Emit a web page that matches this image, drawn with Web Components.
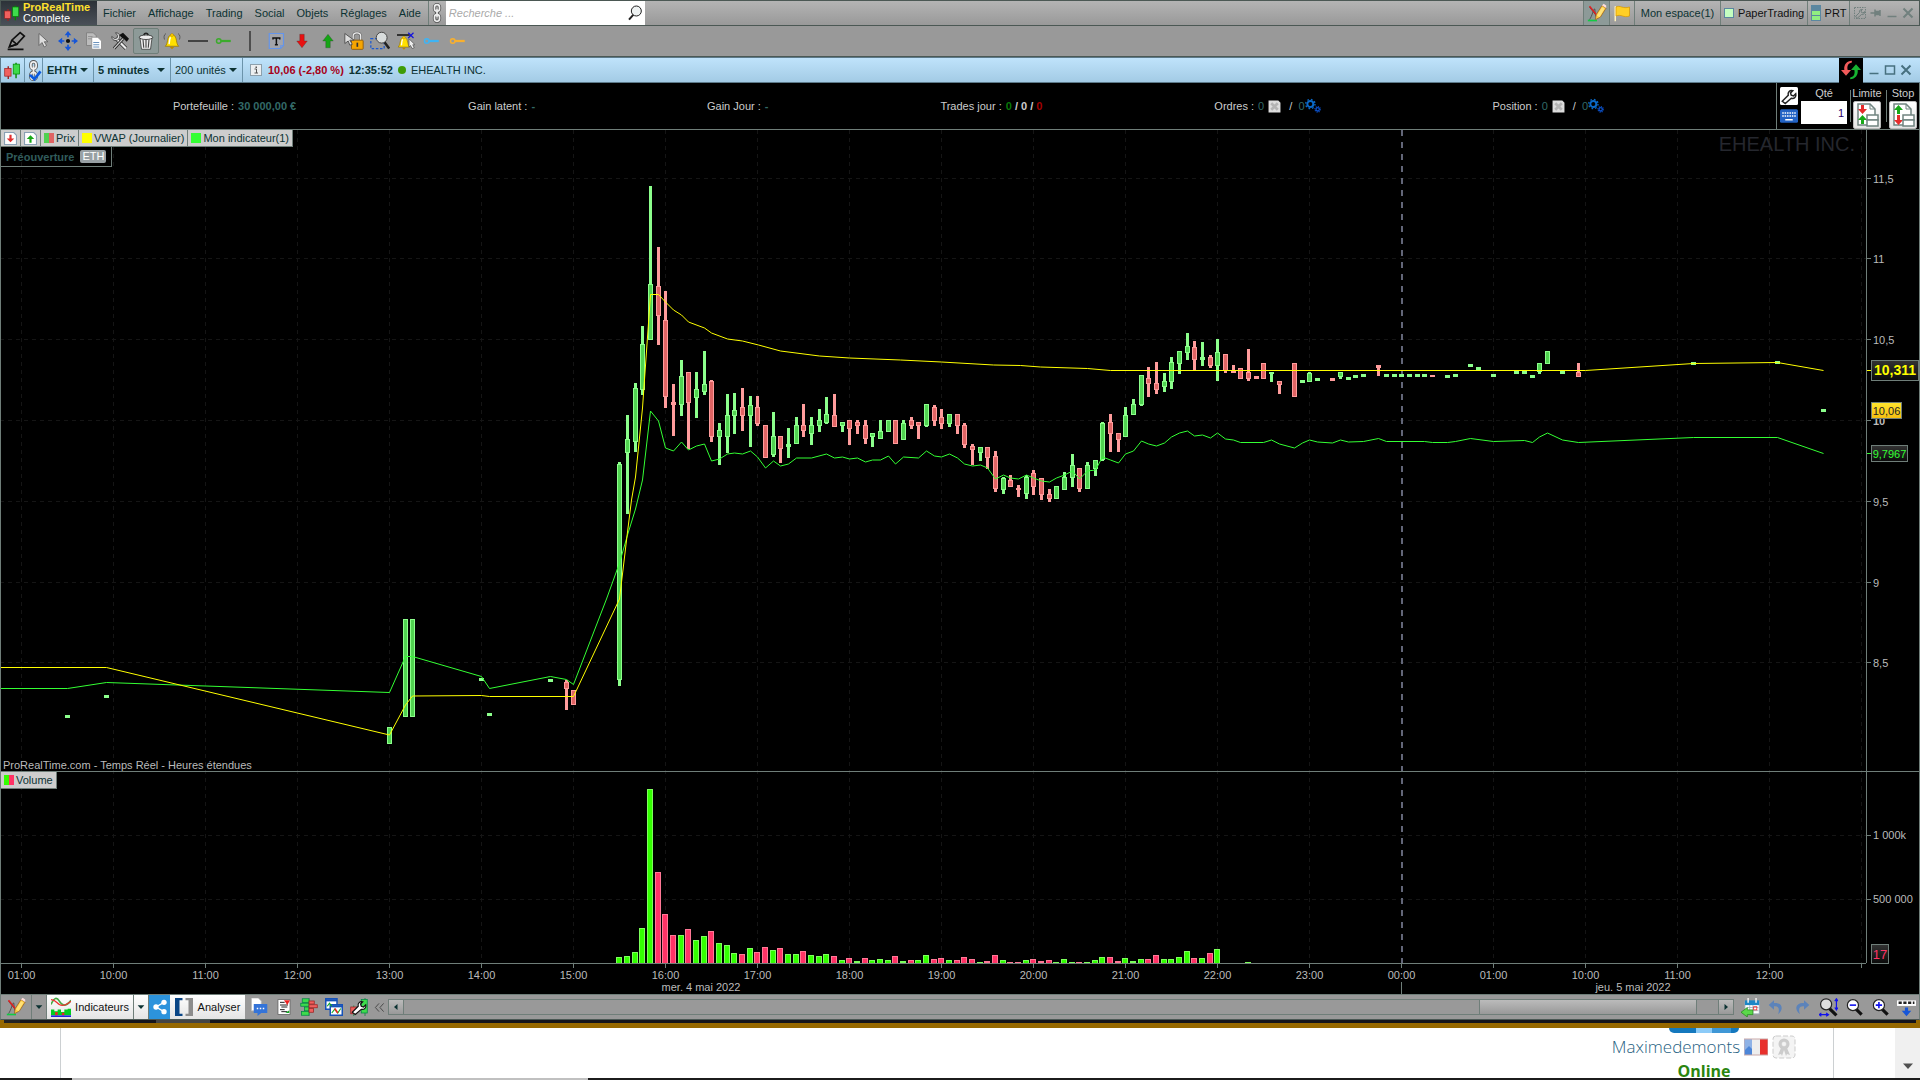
<!DOCTYPE html>
<html lang="fr">
<head>
<meta charset="utf-8">
<title>EHEALTH INC. - ProRealTime Complete</title>
<style>
  html, body { margin: 0; height: 100%; }
  body {
    display: flex;
    flex-direction: column;
    overflow: hidden;
    background: #fff;
    color: #0c3232;
    font: 11px/14px "Liberation Sans", Arial, sans-serif;
  }
  prt-chart { flex: 1; }
</style>
</head>
<body>
<prt-menubar></prt-menubar>
<prt-toolbar></prt-toolbar>
<prt-titlebar></prt-titlebar>
<prt-account></prt-account>
<prt-chart>
  <prt-tag slot="price" icon="tagDown"></prt-tag>
  <prt-tag slot="price" icon="tagUp"></prt-tag>
  <prt-tag slot="price" colors="#50d250,#e06464">Prix</prt-tag>
  <prt-tag slot="price" colors="#ff0,#ff0">VWAP (Journalier)</prt-tag>
  <prt-tag slot="price" colors="#3f3,#3f3">Mon indicateur(1)</prt-tag>
  <prt-tag slot="volume" colors="#3f0,#f36">Volume</prt-tag>
</prt-chart>
<prt-bottombar></prt-bottombar>
<forum-page></forum-page>

<script>
const pencilArt = '<path d="M3 5l9 11M3 20c3-4 5-13 6-13s0 8 3 12" fill="none" stroke="#444"/><path d="M3 4l9 11 5-7" fill="none" stroke="#d22" stroke-width="2"/><path d="M1 21h11" stroke="#1c4" stroke-width="2"/><path d="M10 20l1-6 7-11 5 3-7 11z" fill="#ffcc3c" stroke="#963"/><path d="M12 15l3 2 6-10-3-2z" fill="#ffe27a"/><path d="M18 3l5 3 0-3-3-2z" fill="#fdd"/>';
const keyArt = color => `<circle cx="5" cy="12" r="3" fill="none" stroke="${color}" stroke-width="2"/><path d="M8 12h13" stroke="${color}" stroke-width="3"/>`;
const arrowArt = color => `<path d="M9 3h6v9h4l-7 9-7-9h4z" fill="${color}" stroke="#333" stroke-width=".4"/>`;
const lensArt = sign => `<path d="M14 14l7 7" stroke="#111" stroke-width="4"/><circle cx="10" cy="9" r="7" fill="#fff" stroke="#222" stroke-width="1.5"/>${sign}`;
const bellArt = '<path d="M3 19c4-3 2-13 7-15h4c5 2 3 12 7 15z" fill="#ffe000" stroke="#987400"/><circle cx="12" cy="4" r="2" fill="#fc0" stroke="#987400" stroke-width=".5"/><path d="M9 20h6l-3 3z" fill="#b80"/><path d="M10 7c-2 3-1 7-2 9" stroke="#fff" stroke-width="2" fill="none"/>';
const cursorArt = '<path d="M8 2v16l4-4 3 6 3-2-3-5h5z" fill="#ddd" stroke="#555"/>';
const candleArt = '<path d="M17 1v22" stroke="#080" stroke-width="2"/><path d="M6 6v18" stroke="#922" stroke-width="2"/><rect x="1" y="9" width="9" height="11" fill="#f0605e" stroke="#922"/><rect x="13" y="3" width="9" height="14" fill="#3fdb4c" stroke="#080"/>';
const linkArt = '<g fill="none" stroke="#555" stroke-width="4"><rect x="9" y="2" width="6" height="8" rx="3"/><rect x="9" y="14" width="6" height="8" rx="3"/><path d="M12 7v10"/></g><g fill="none" stroke="#eee" stroke-width="2"><rect x="9" y="2" width="6" height="8" rx="3"/><rect x="9" y="14" width="6" height="8" rx="3"/><path d="M12 7v10"/></g>';
const wrenchPath = 'M3 19l8-8c-1-4 2-7 6-6l-3 3 1 3 3 1 3-3c1 4-2 7-6 6l-8 7z';
const gearsArt = '<circle cx="8" cy="9" r="4.500" fill="none" stroke="#0b69c7" stroke-width="3"/><circle cx="8" cy="9" r="7" fill="none" stroke="#0b69c7" stroke-width="2" stroke-dasharray="2.500 3"/><circle cx="19" cy="17" r="2.500" fill="none" stroke="#0b4fc7" stroke-width="2"/><circle cx="19" cy="17" r="4" fill="none" stroke="#0b4fc7" stroke-width="2" stroke-dasharray="1.500 1.600"/>';
const sheetArt = '<path d="M3 1h12l5 5v16H3z" fill="#fff" stroke="#708480" stroke-width="1.500"/><path d="M15 1v5h5" fill="none" stroke="#708480"/>';
const boxesArt = '<rect x="12" y="12" width="11" height="5" fill="#fff" stroke="#708480" stroke-width="1.500"/><rect x="12" y="17" width="11" height="6" fill="#fff" stroke="#708480" stroke-width="1.500"/>';

// every icon is drawn on a 24 x 24 grid
const ICONS = {
  candles: candleArt,
  link: linkArt,
  linkCheck: linkArt + '<path d="M8 17l5 5 7-9" fill="none" stroke="#0a5ae0" stroke-width="3"/>',
  search: '<path d="M10 14l-7 8" stroke="#222" stroke-width="3"/><circle cx="14" cy="9" r="7.500" fill="#eef2f2" stroke="#222" stroke-width="1.500"/>',
  pencil: pencilArt,
  flag: '<path d="M3 3v20" stroke="#fff2c0" stroke-width="2"/><path d="M4 4c5-3 9 3 18 0v12c-8 3-11-3-18 0z" fill="#ffcf26" stroke="#d99a00"/>',
  pen: '<path d="M4 19l3-8L17 2l5 4-9 10z" fill="none" stroke="#111" stroke-width="2"/><path d="M4 19l9-3-6-5M2 22h19" stroke="#111" fill="none" stroke-width="2"/>',
  cursor: cursorArt,
  move: '<path d="M12 0l4 5h-3v14h3l-4 5-4-5h3V5H8zM0 12l5-4v3h14V8l5 4-5 4v-3H5v3z" fill="#1656d8"/><circle cx="12" cy="12" r="4.500" fill="#999"/><circle cx="12" cy="12" r="2.500" fill="#111"/>',
  copy: '<path d="M2 1h9l4 4v13H2z" fill="#bbb" stroke="#777"/><path d="M4 6h6M4 9h5" stroke="#888"/><path d="M9 7h8l5 5v11H9z" fill="#fff" stroke="#888"/><path d="M11 14h8M11 17h8M11 20h8" stroke="#3a6fa8"/>',
  tools: '<path d="M6 8l14 14" stroke="#222" stroke-width="5"/><path d="M6 8l14 14" stroke="#eee" stroke-width="3"/><path d="M1 6l4 3 3-1 1-3-3-4c6 0 7 5 4 9-4 3-9 1-9-4z" fill="#ddd" stroke="#333"/><path d="M16 9L4 22" stroke="#222" stroke-width="4"/><path d="M16 9L4 22" stroke="#ccc" stroke-width="1.500"/><path d="M11 4l5-3 8 8-3 4-4-4-2-1z" fill="#111"/>',
  trash: '<path d="M4 8h16l-2 15H6z" fill="#eee" stroke="#333"/><path d="M8 10l1 11M12 10v11M16 10l-1 11" stroke="#444" stroke-width="1.500"/><ellipse cx="12" cy="7" rx="9" ry="3" fill="#eee" stroke="#222"/><path d="M9 4c1-3 5-3 6 0" fill="none" stroke="#222" stroke-width="2"/>',
  bell: bellArt + '<path d="M4 2c-3 2-3 5-2 8M20 2c3 2 3 5 2 8" fill="none" stroke="#444"/>',
  line: '<path d="M0 12h24" stroke="#111" stroke-width="1.500"/>',
  keyGreen: keyArt('#3bab2c'),
  sep: '<path d="M12 0v24" stroke="#222" stroke-width="1.500"/>',
  text: '<path d="M3 2h19v16l-4 4H3z" fill="#a2a4aa" stroke="#6394ea" stroke-width="1.500"/><path d="M22 18h-4v4" fill="none" stroke="#6394ea"/><path d="M8 8h9M12.500 8v9M10.500 17h4M8 7v3M17 7v3" stroke="#111" stroke-width="2" fill="none"/>',
  arrowRed: arrowArt('#e81010'),
  arrowGreen: '<g transform="rotate(180 12 12)">' + arrowArt('#15a515') + '</g>',
  lock: '<path d="M11 11V6c0-5 9-5 9 0v5" fill="none" stroke="#666" stroke-width="3"/><path d="M11 11V6c0-5 9-5 9 0v5" fill="none" stroke="#eee" stroke-width="1.500"/><rect x="9" y="11" width="14" height="11" rx="1" fill="#f6a500" stroke="#8b5500"/><path d="M16 14v5" stroke="#333" stroke-width="2"/><path d="M1 3v12l4-3 2 5 3-1-3-5h5z" fill="#ddd" stroke="#444"/>',
  zoomRect: '<rect x="1" y="9" width="16" height="12" fill="none" stroke="#1d5ad0" stroke-width="1.500" stroke-dasharray="3 2"/><path d="M17 13l6 8" stroke="#222" stroke-width="3"/><circle cx="14" cy="8" r="6.500" fill="#d8dcdc" stroke="#333"/>',
  bellLine: '<g transform="translate(-1 4) scale(.85)">' + bellArt + '</g><path d="M0 4h17" stroke="#111" stroke-width="2"/><path d="M15 1l7 7M22 1l-7 7" stroke="#11d" stroke-width="1.500"/><path d="M16 9v11l2-2 2 4 3-1-2-4h3z" fill="#eee" stroke="#555"/>',
  keyBlue: keyArt('#3fb4f4'),
  keyOrange: keyArt('#f9b02e'),
  info: '<rect x="1" y="1" width="22" height="22" fill="#eceff1" stroke="#8da0ac" stroke-width="2"/><path d="M9 10h4v8M9 18h7" stroke="#555" stroke-width="2" fill="none"/><path d="M11 5h3v3h-3z" fill="#555"/>',
  refresh: '<path d="M13 3C8 4 7 8 8 12h4l-6 7-6-7h4C3 6 7 1 13 1z" fill="#f25a5a"/><path d="M11 21c5-1 6-5 5-9h-4l6-7 6 7h-4c1 6-3 11-9 11z" fill="#17b331"/>',
  min: '<path d="M3 19h18" stroke="currentColor" stroke-width="3"/>',
  max: '<rect x="3" y="4" width="18" height="16" fill="none" stroke="currentColor" stroke-width="3"/>',
  close: '<path d="M3 3l18 18M21 3L3 21" stroke="currentColor" stroke-width="4"/>',
  pin: '<path d="M1 12h8M10 5v14M10 12h10M20 6v12M11 9h8v6h-8z" stroke="currentColor" stroke-width="3" fill="currentColor"/>',
  settings: '<rect x="1" y="1" width="22" height="22" fill="none" stroke="currentColor" stroke-width="2" stroke-dasharray="3 2"/><path d="' + wrenchPath + '" fill="none" stroke="currentColor" stroke-width="2"/>',
  wrench: '<rect width="24" height="24" rx="2" fill="#fff"/><path d="' + wrenchPath + '" fill="none" stroke="#222" stroke-width="2"/>',
  keyboard: '<rect y="3" width="24" height="18" rx="2" fill="#2363c4"/><path d="M3 8h18M3 12h18" stroke="#fff" stroke-width="2" stroke-dasharray="2 1.200"/><path d="M7 17h10" stroke="#fff" stroke-width="2"/>',
  gears: gearsArt,
  cross: '<path d="M1 1h18l4 4v18H1z" fill="#ddd"/><path d="M6 6l12 12M18 6L6 18" stroke="#b4b4b4" stroke-width="5"/>',
  limit: sheetArt + '<path d="M6 2h3v4h3l-4.500 5L3 6h3z" fill="#e62b2b"/><path d="M6 21h3v-4h3l-4.500-5L3 17h3z" fill="#18a818"/>' + boxesArt,
  stop: sheetArt + '<path d="M6 11h3V7h3L7.500 2 3 7h3z" fill="#18a818"/><path d="M6 12h3v5h3l-4.500 5L3 17h3z" fill="#e62b2b"/>' + boxesArt,
  tagDown: '<path d="M1 1h17l5 5v17H1z" fill="#fff" stroke="#8aa0b4" stroke-width="2"/><path d="M10 5h4v7h5l-7 7-7-7h5z" fill="#e23030"/>',
  tagUp: '<path d="M1 1h17l5 5v17H1z" fill="#fff" stroke="#8aa0b4" stroke-width="2"/><path d="M10 20h4v-7h5l-7-7-7 7h5z" fill="#18a818"/>',
  indicator: '<path d="M0 9c4-9 7-9 10-4s7 8 14-1" fill="none" stroke="#4a4" stroke-width="2"/><path d="M0 3c5 0 7 4 10 6s8 1 14-4" fill="none" stroke="#e33" stroke-width="1.500"/><path d="M0 22v-7h4v2h4v-2h4v3h4v-3h4v-1h4v8z" fill="#0c2"/><path d="M5 18h3v4H5zM13 19h3v3h-3z" fill="#e22"/><path d="M0 23h24" stroke="#22d" stroke-width="2"/>',
  share: '<path d="M18 5L6 12l12 7" fill="none" stroke="#fff" stroke-width="2"/><g fill="#fff"><circle cx="18" cy="5" r="4"/><circle cx="6" cy="12" r="4"/><circle cx="18" cy="19" r="4"/></g>',
  brackets: '<path d="M10 0H0v24h10v-3H6V3h4z" fill="#0a4686"/><path d="M14 0h10v24H14v-3h4V3h-4z" fill="#8c8c8c"/>',
  chat: '<path d="M2 0h9l4 4v13H2z" fill="#fff" stroke="#bbb"/><path d="M5 8h18v12h-8l-5 4v-4H5z" fill="#3474d8"/><path d="M9 14h2M13 14h2M17 14h2" stroke="#fff" stroke-width="2"/>',
  report: '<rect x="3" y="1" width="18" height="22" fill="#fff" stroke="#555"/><path d="M6 5h7M6 9h12M8 12h9M6 16h7M8 19h9" stroke="#222" stroke-width="1.500"/><path d="M12 2h9l-4 7z" fill="#e22"/><path d="M14 21l6-4v4z" fill="#1a2"/>',
  book: '<path d="M12 0v24" stroke="#555"/><g fill="#3ddb4c" stroke="#084"><rect x="3" y="1" width="9" height="5"/><rect x="1" y="7" width="11" height="4"/><rect x="6" y="12" width="6" height="5"/><rect x="2" y="18" width="10" height="5"/></g><g fill="#f0605e" stroke="#922"><rect x="12" y="4" width="7" height="4"/><rect x="12" y="9" width="11" height="4"/><rect x="12" y="14" width="6" height="5"/></g>',
  windows: '<rect x="1" y="1" width="15" height="14" fill="#fff" stroke="#1652b8" stroke-width="2"/><path d="M1 3h15" stroke="#1652b8" stroke-width="3"/><rect x="7" y="9" width="16" height="14" fill="#fff" stroke="#1652b8" stroke-width="2"/><path d="M7 11h16" stroke="#1652b8" stroke-width="3"/><path d="M3 11l3-4 3 4M9 20l4-5 4 5 4-6" fill="none" stroke="#1a2" stroke-width="1.500"/><path d="M13 14l4 6" stroke="#e22" stroke-width="2"/>',
  candleTool: '<path d="M20 0v24M5 10v14" stroke="#083"/><rect x="15" y="2" width="8" height="18" fill="#3fdb4c" stroke="#084"/><rect x="1" y="12" width="8" height="9" fill="#f0605e" stroke="#922"/><path d="' + wrenchPath + '" fill="#fff" stroke="#111" stroke-width="1.500"/>',
  chevrons: '<path d="M11 3l-8 9 8 9M21 3l-8 9 8 9" fill="none" stroke="#444" stroke-width="2"/>',
  left: '<path d="M15 6v12l-7-6z" fill="#0c3232"/>',
  right: '<path d="M9 6v12l7-6z" fill="#0c3232"/>',
  down: '<path d="M2 7h20L12 18z" fill="currentColor"/>',
  calendar: '<rect x="5" y="4" width="18" height="16" fill="#fff" stroke="#9ab"/><path d="M5 3h18v6H5z" fill="#1d86c6"/><path d="M9 0v6M19 0v6" stroke="#eee" stroke-width="2"/><path d="M8 12h14M8 16h14M11 9v10M15 9v10" stroke="#9ab"/><rect x="16" y="11" width="4" height="4" fill="none" stroke="#e22"/><path d="M0 18l8-6v3h7v6H8v3z" fill="#5bd84a" stroke="#2a8a22"/>',
  undo: '<path d="M9 2L1 9l8 7v-5c7-1 9 4 6 12 9-7 7-18-6-17z" fill="#5c83ba"/>',
  redo: '<path d="M15 2l8 7-8 7v-5c-7-1-9 4-6 12-9-7-7-18 6-17z" fill="#5c83ba"/>',
  zoomFit: '<path d="M13 13l9 9" stroke="#111" stroke-width="4"/><circle cx="9" cy="8" r="7" fill="#ddd" stroke="#222" stroke-width="1.500"/><path d="M22 1v14M20 4l2-3 2 3M20 12l2 3 2-3M0 21h12M3 19l-3 2 3 2M9 19l3 2-3 2" fill="none" stroke="#11e" stroke-width="1.500"/>',
  zoomOut: lensArt('<path d="M6 9h8" stroke="#11e" stroke-width="2"/>'),
  zoomIn: lensArt('<path d="M6 9h8M10 5v8" stroke="#11e" stroke-width="2"/>'),
  dockDown: '<rect y="3" width="24" height="7" fill="#fff"/><path d="M2 6h20" stroke="#222" stroke-width="3" stroke-dasharray="4 2"/><path d="M10 12h4v4h4l-6 7-6-7h4z" fill="#1656d8"/>',
  france: '<path d="M0 4h8v16H0z" fill="#8fb2e6"/><path d="M8 4h8v16H8z" fill="#eee"/><path d="M16 4h8v16h-8z" fill="#e8302c"/><path d="M1 20v-5l4-4 3 3v6z" fill="#4d86d8"/><path d="M0 4h24v16H0z" fill="none" stroke="#c9a9a9"/>',
  badge: '<rect x="1" y="1" width="22" height="22" rx="3" fill="#f4f4f4" stroke="#ccc" stroke-dasharray="5 2"/><circle cx="12" cy="9" r="4" fill="#ddd" stroke="#ccc" stroke-width="3"/><circle cx="12" cy="9" r="2" fill="#f4f4f4"/><path d="M9 13l-3 7 3-1 1 2 2-6 2 6 1-2 3 1-3-7" fill="#ccc"/>'
};

class PrtIcon extends HTMLElement {
  constructor() {
    super();
    this.attachShadow({ mode: 'open' });
  }

  connectedCallback() {
    const size = this.getAttribute('size') || 24;
    this.shadowRoot.innerHTML = `
      <style>
        :host { display: block; flex: none; }
        svg { display: block; }
      </style>
      <svg width="${size}" height="${size}" viewBox="0 0 24 24" aria-hidden="true">${ICONS[this.getAttribute('name')]}</svg>
    `;
  }
}
customElements.define('prt-icon', PrtIcon);

const icon = (name, size = 24) => `<prt-icon name="${name}" size="${size}"></prt-icon>`;
const iconButton = (name, size, cls = '') => `<button class="${cls}" aria-label="${name}">${icon(name, size)}</button>`;

// shared by every bar
const base = `
  * { box-sizing: border-box; }
  button, select, input {
    margin: 0; padding: 0; border: 0; border-radius: 0;
    background: none; color: inherit; font: inherit;
  }
  button { display: flex; align-items: center; justify-content: center; white-space: nowrap; }
`;

class PrtMenubar extends HTMLElement {
  constructor() {
    super();
    this.attachShadow({ mode: 'open' });
    const menus = ['Fichier', 'Affichage', 'Trading', 'Social', 'Objets', 'Réglages', 'Aide'];
    this.shadowRoot.innerHTML = `
      <style>
        ${base}
        :host {
          display: flex; height: 26px; box-sizing: border-box;
          border: 1px solid #4b5854;
          background: linear-gradient(#b4b4b4, #999);
        }
        .logo {
          display: flex; align-items: center; gap: 3px;
          width: 96px; padding-left: 3px;
          background: linear-gradient(#2c3238, #4a5058);
          color: #fff; line-height: 11px;
        }
        .logo b { display: block; color: #ffe02c; }
        nav { display: flex; gap: 12px; padding: 0 7px 0 6px; }
        .link { width: 18px; border-left: 1px solid #6f7e79; }
        label { display: flex; align-items: center; width: 199px; padding-right: 2px; background: #fff; }
        input { flex: 1; min-width: 0; padding-left: 3px; outline: 0; }
        input::placeholder { color: #aaa; font-style: italic; opacity: 1; }
        .right { display: flex; margin-left: auto; }
        .right > * { border-left: 1px solid #6f7e79; }
        .edit { width: 26px; background: #8d9a98; }
        .flag { width: 25px; }
        .space { width: 86px; }
        .paper, .prt { gap: 4px; color: #111; }
        .paper { width: 87px; }
        .paper i { width: 10px; height: 10px; border: 1px solid #5b87a0; background: #c4ffc0; }
        .prt { width: 42px; }
        .prt i { width: 10px; height: 16px; border: 1px solid #5b87a0; background: linear-gradient(#5b87a0 5px, #90ee80 5px 9px, #5b87a0 9px 10px, #90ee80 10px); }
        .win { display: flex; align-items: center; gap: 4px; width: 70px; padding-left: 4px; color: #71807e; }
      </style>
      <div class="logo">${icon('candles', 16)}<span><b>ProRealTime</b>Complete</span></div>
      <nav>${menus.map(menu => `<button>${menu}</button>`).join('')}</nav>
      ${iconButton('link', 20, 'link')}
      <label><input type="search" placeholder="Recherche ..." aria-label="Recherche">${icon('search', 16)}</label>
      <div class="right">
        ${iconButton('pencil', 20, 'edit')}
        ${iconButton('flag', 18, 'flag')}
        <button class="space">Mon espace(1)</button>
        <button class="paper"><i></i>PaperTrading</button>
        <button class="prt"><i></i>PRT</button>
        <div class="win">${iconButton('settings', 12)}${iconButton('pin', 12)}${iconButton('min', 12)}${iconButton('close', 12)}</div>
      </div>
    `;
  }
}
customElements.define('prt-menubar', PrtMenubar);

class PrtToolbar extends HTMLElement {
  constructor() {
    super();
    this.attachShadow({ mode: 'open' });
    const tools = ['pen', 'cursor', 'move', 'copy', 'tools', 'trash', 'bell', 'line', 'keyGreen', 'sep', 'text',
      'arrowRed', 'arrowGreen', 'lock', 'zoomRect', 'bellLine', 'keyBlue', 'keyOrange'];
    this.shadowRoot.innerHTML = `
      <style>
        ${base}
        :host {
          display: flex; align-items: center; height: 31px; box-sizing: border-box; padding-left: 3px;
          border-bottom: 1px solid #4b5854;
          background: #999;
        }
        button { width: 26px; height: 26px; }
        .trash { border: 1px solid #6f7e79; border-radius: 2px; background: #8d9a98; }
      </style>
      ${tools.map(tool => iconButton(tool, /^(arrow|copy|cursor|key|text|trash|bell|tools)/.test(tool) ? 18 : 20, tool)).join('')}
    `;
  }
}
customElements.define('prt-toolbar', PrtToolbar);

class PrtTitlebar extends HTMLElement {
  constructor() {
    super();
    this.attachShadow({ mode: 'open' });
    this.shadowRoot.innerHTML = `
      <style>
        ${base}
        :host {
          display: flex; align-items: stretch; height: 26px; box-sizing: border-box;
          border: solid #5d7a8a; border-width: 1px 0 1px 1px;
          background: linear-gradient(#bfe3fb, #a3cbe5);
        }
        .cell { flex: none; border-right: 1px solid #6b93aa; }
        .candle { width: 24px; }
        .link { width: 18px; }
        .pick { display: flex; align-items: center; position: relative; }
        .pick::after {
          content: ""; position: absolute; right: 5px; pointer-events: none;
          border: solid transparent; border-width: 4px 4px 0; border-top-color: #0c3232;
        }
        select { appearance: none; width: 100%; height: 100%; padding-left: 4px; outline: 0; }
        .symbol { width: 51px; font-weight: bold; }
        .period { width: 77px; font-weight: bold; }
        .units { width: 72px; }
        .quote { display: flex; align-items: center; gap: 5px; padding-left: 7px; white-space: nowrap; }
        .last { color: #a60018; }
        .dot { width: 8px; height: 8px; border-radius: 50%; background: #3f9c06; }
        .info { margin-right: 1px; }
        .win { display: flex; align-items: center; margin-left: auto; color: #47707f; }
        .refresh { width: 24px; height: 25px; background: #000; }
        .ctl { width: 16px; }
        .win::after { content: ""; width: 6px; }
        .refresh + .ctl { margin-left: 3px; }
      </style>
      ${iconButton('candles', 17, 'cell candle')}
      ${iconButton('linkCheck', 21, 'cell link')}
      <div class="cell pick symbol"><select aria-label="Valeur"><option>EHTH</option></select></div>
      <div class="cell pick period"><select aria-label="Période"><option>5 minutes</option></select></div>
      <div class="cell pick units"><select aria-label="Unités"><option>200 unités</option></select></div>
      <div class="quote">
        <span class="info">${icon('info', 12)}</span>
        <b class="last">10,06 (-2,80 %)</b>
        <b>12:35:52</b>
        <i class="dot"></i>
        <span>EHEALTH INC.</span>
      </div>
      <div class="win">
        ${iconButton('refresh', 20, 'refresh')}
        ${iconButton('min', 12, 'ctl')}${iconButton('max', 12, 'ctl')}${iconButton('close', 12, 'ctl')}
      </div>
    `;
  }
}
customElements.define('prt-titlebar', PrtTitlebar);

class PrtAccount extends HTMLElement {
  constructor() {
    super();
    this.attachShadow({ mode: 'open' });
    this.shadowRoot.innerHTML = `
      <style>
        ${base}
        :host {
          display: flex; height: 47px; box-sizing: border-box;
          border: solid #6f7e79; border-width: 0 1px 1px;
          background: #000; color: #ccc; white-space: nowrap;
        }
        .fields { flex: 1; display: flex; align-items: center; justify-content: space-evenly; }
        .fields > div { display: flex; align-items: center; gap: 4px; }
        b, i { color: #336a67; font-style: normal; }
        .count { font-weight: bold; }
        .gear { display: flex; align-items: center; margin-left: 4px; }
        .win { color: #087808; }
        .loss { color: #a00000; }
        .order { display: flex; gap: 3px; width: 143px; padding: 3px 0 0 3px; border-left: 1px solid #6f7e79; }
        .side { display: flex; flex-direction: column; gap: 2px; padding-top: 1px; }
        .qty { display: flex; flex-direction: column; gap: 1px; text-align: center; }
        input { width: 46px; height: 23px; padding-right: 3px; background: #fff; color: #2c0066; text-align: right; }
        .kind { display: flex; flex-direction: column; align-items: center; gap: 1px; width: 33px; }
        .kind button { width: 28px; height: 28px; border: 1px solid #bbb; border-radius: 2px; background: linear-gradient(#fff, #e4e4e4); }
        hr { width: 1px; height: 32px; margin: 4px 0 0; border: 0; background: #6f7e79; }
        .order hr { margin-right: -3px; }
      </style>
      <div class="fields">
        <div><span>Portefeuille :</span><b>30 000,00 €</b></div>
        <div><span>Gain latent :</span><b>-</b></div>
        <div><span>Gain Jour :</span><b>-</b></div>
        <div><span>Trades jour :</span><span class="count"><b class="win">0</b> / 0 / <b class="loss">0</b></span></div>
        <div><span>Ordres :</span><i>0</i>${icon('cross', 13)}<span class="gear">/&nbsp;&nbsp;<i>0</i>${icon('gears', 16)}</span></div>
        <div><span>Position :</span><i>0</i>${icon('cross', 13)}<span class="gear">/&nbsp;&nbsp;<i>0</i>${icon('gears', 16)}</span></div>
      </div>
      <div class="order">
        <div class="side">${iconButton('wrench', 18)}${iconButton('keyboard', 18)}</div>
        <div class="qty"><label for="qty">Qté</label><input id="qty" value="1"></div>
        <hr>
        <div class="kind"><span>Limite</span>${iconButton('limit', 24)}</div>
        <hr>
        <div class="kind"><span>Stop</span>${iconButton('stop', 24)}</div>
      </div>
    `;
  }
}
customElements.define('prt-account', PrtAccount);

class PrtTag extends HTMLElement {
  constructor() {
    super();
    this.attachShadow({ mode: 'open' });
  }

  connectedCallback() {
    const [a, b] = (this.getAttribute('colors') || '').split(',');
    const mark = this.hasAttribute('icon') ? icon(this.getAttribute('icon'), 13) : `<i style="background: linear-gradient(90deg, ${a} 50%, ${b} 50%)"></i>`;
    this.shadowRoot.innerHTML = `
      <style>
        :host {
          display: flex; align-items: center; gap: 2px; height: 17px; box-sizing: border-box;
          padding: 0 3px; border: solid #6f7e79; border-width: 0 1px 1px 0;
          background: #cdcdcd; color: #0c3232; white-space: nowrap;
        }
        i { width: 10px; height: 10px; }
      </style>
      ${mark}<slot></slot>
    `;
  }
}
customElements.define('prt-tag', PrtTag);

// [5-minute step from 16:00, rising, high, body top, body bottom, low]
const CANDLES = [
  [-78,1,715,715,718,718],[-73,1,695,695,698,698],[-36,1,727,727,744,744],[-34,1,619,619,717,717],[-33,1,619,619,717,717],
  [-24,1,678,678,681,681],[-23,1,713,713,716,716],[-15,1,679,679,682,682],[-13,0,680,682,689,710],[-12,0,690,690,705,705],
  [-6,1,462,464,680,686],[-5,1,415,439,453,514],[-4,1,383,388,442,452],[-3,1,326,344,390,395],[-2,1,186,284,340,340],
  [-1,0,247,286,316,345],[0,0,291,320,397,408],[1,0,384,402,405,436],[2,1,360,376,405,416],[3,0,372,372,403,449],
  [4,1,372,389,398,418],[5,1,351,384,392,395],[6,0,380,381,437,442],[7,1,423,430,437,465],[8,1,394,415,437,453],
  [9,1,393,410,416,434],[10,0,388,407,416,431],[11,1,396,405,416,447],[12,0,396,407,424,426],[13,0,425,425,458,458],
  [14,1,412,436,455,457],[15,0,436,436,449,463],[16,1,428,444,447,458],[17,1,417,425,444,444],[18,0,404,425,431,437],
  [19,1,417,425,434,445],[20,1,409,420,426,432],[21,1,397,414,423,424],[22,0,394,415,427,427],[23,1,422,422,426,432],
  [24,0,420,420,429,445],[25,0,420,422,426,434],[26,0,420,425,439,444],[27,1,433,433,437,447],[28,1,420,431,439,439],
  [29,1,420,420,432,432],[30,0,420,420,444,444],[31,1,420,423,440,440],[32,0,417,420,426,429],[33,0,422,422,426,439],
  [34,1,404,404,426,427],[35,0,405,407,421,426],[36,0,409,417,424,429],[37,1,414,414,424,427],[38,0,414,414,426,434],
  [39,0,423,425,445,448],[40,0,444,446,450,465],[41,1,447,447,453,461],[42,0,447,447,458,469],[43,0,451,456,489,492],
  [44,1,477,478,490,494],[45,0,475,480,487,487],[46,0,485,488,490,497],[47,1,475,477,494,499],[48,0,470,473,487,495],
  [49,0,478,478,495,500],[50,0,489,494,499,502],[51,1,486,486,499,499],[52,1,472,477,490,490],[53,1,454,465,478,487],
  [54,0,468,468,489,492],[55,1,462,465,489,489],[56,1,460,460,469,476],[57,1,422,423,460,461],[58,0,414,422,434,452],
  [59,0,433,433,440,452],[60,1,407,415,437,437],[61,1,399,404,415,415],[62,1,375,375,405,406],[63,0,367,378,384,397],
  [64,0,362,383,390,394],[65,1,373,381,387,392],[66,1,357,362,382,389],[67,1,351,351,364,374],[68,1,333,346,353,360],
  [69,0,341,347,360,370],[70,1,342,357,360,366],[71,0,355,357,366,368],[72,1,339,352,366,381],[73,0,354,354,371,373],
  [74,0,365,370,373,373],[75,0,368,368,379,379],[76,0,349,372,379,381],[77,0,376,376,379,379],[78,0,363,363,379,379],
  [79,1,372,372,374,382],[80,0,381,381,385,394],[82,0,363,363,397,397],[83,1,380,380,383,383],[84,1,372,373,382,382],
  [85,1,378,378,381,381],[87,0,378,378,381,381],[88,1,372,372,377,379],[89,1,377,377,380,380],[90,1,375,375,378,378],
  [91,1,374,374,377,377],[93,0,365,365,368,376],[94,1,374,374,377,377],[95,1,374,374,377,377],[96,1,374,374,377,377],
  [97,1,374,374,377,377],[98,1,374,374,377,377],[99,1,374,374,377,377],[100,0,375,375,377,377],[102,1,375,375,378,378],
  [103,1,374,374,377,377],[105,1,364,364,367,367],[106,1,367,367,370,370],[108,1,374,374,377,377],[111,1,371,371,374,374],
  [112,1,371,371,374,374],[113,1,375,375,378,378],[114,1,363,363,372,374],[115,1,351,351,364,364],[117,1,371,371,374,374],
  [119,0,363,372,377,377],[134,1,362,362,365,365],[145,1,361,361,364,364],[151,1,409,409,412,412]
];

const VWAP = '0,667.5 106,667.5 389,735 405,705 412,696 481,695.5 489,696.5 573,696.5 619,599 627,532 631,500 635,477 642,408 650,294.5 658,294.5 665,302 673,310 681,315 688,322 704,328 711,333 727,339 742,341 758,345 780,351 819,356 849,358 900,360 941,362 993,365 1020,365.5 1040,367 1087,368.5 1110,370.5 1585,370.5 1693,363.5 1777,362.5 1823,370.5';
const INDICATOR = '0,688.5 67,688.5 106,682.5 389,692.5 405,656.5 412,656.5 481,676.5 489,688.5 550,676.5 566,679.5 573,684.5 606,599 619,563 627,535 635,509 642,480 650,411 658,421 665,448 673,451 681,442 688,450 696,446 704,444 711,461 719,459 727,454 734,453 742,454 750,451 757,457 765,468 773,461 780,466 788,464 796,458 811,458 826,454 834,458 842,457 849,459 857,458 865,462 872,460 880,460 888,456 895,464 903,457 918,458 926,451 934,456 941,457 949,454 957,458 964,464 972,466 980,465 987,468 995,479 1003,475 1010,478 1018,479 1026,475 1033,478 1041,481 1049,482 1056,478 1064,475 1072,471 1079,479 1087,471 1095,470 1102,457 1110,460 1118,463 1125,454 1133,451 1141,441 1148,444 1156,446 1164,443 1171,437 1179,433 1187,431 1194,436 1202,435 1210,438 1217,433 1225,439 1233,440 1240,442.5 1263,442.5 1271,440 1279,444 1294,448 1302,443 1309,440 1317,442 1332,443 1340,440 1348,442 1363,441.5 1378,438.5 1386,441.5 1424,441.5 1432,442.5 1447,442.5 1455,441.5 1470,438.5 1493,441.5 1524,440.5 1532,442.5 1539,437 1547,433 1562,440 1578,442.5 1693,437.5 1777,437.5 1823,453.5';

// bar heights from 15:30, negative for a falling candle
const VOLUMES = [6,7,11,35,174,-91,-49,-28,28,-34,23,27,-32,20,18,10,-9,15,-11,-16,13,-15,9,9,-12,8,7,9,-7,3,-5,2,-5,3,4,3,-7,
  2,-3,3,8,-4,-5,3,-3,-6,-4,1,-2,-8,3,-1,-1,3,-4,-2,-3,1,4,1,-1,1,3,6,-6,-2,5,2,4,-4,-8,4,4,6,12,-5,5,-10,14,0,0,0,1];

const HOURS = ['01:00','10:00','11:00','12:00','13:00','14:00','15:00','16:00','17:00','18:00','19:00','20:00','21:00','22:00','23:00','00:00','01:00','10:00','11:00','12:00'];
const LEVELS = [['11,5',178.5],['11',258.5],['10,5',339.5],['10',420.5],['9,5',501.5],['9',582.5],['8,5',662.5]];

// data is plotted in these units: the plot is 1866 wide, from 130 down to 994
const PLOT = { width: 1866, top: 130, height: 864, axis: 54 };

class PrtChart extends HTMLElement {
  constructor() {
    super();
    this.attachShadow({ mode: 'open' });
    this.shadowRoot.innerHTML = `
      <style>
        :host { display: block; position: relative; min-height: 0; overflow: hidden; background: #000; }
        svg { display: block; position: absolute; inset: 0; width: 100%; height: 100%; font-size: 11px; }
        .tags { position: absolute; left: 1px; display: flex; }
        .volume { top: 74.306%; }
        .session {
          position: absolute; top: 17px; left: 1px; display: flex; align-items: center; gap: 6px;
          height: 20px; padding: 0 5px; box-sizing: border-box;
          border: solid #6f7e79; border-width: 0 1px 1px 0;
          color: #315c5c; font-weight: bold;
        }
        .session span { padding: 0 2px; border-radius: 2px; background: #98a0a4; color: #fff; font-weight: normal; line-height: 13px; }
      </style>
      <svg></svg>
      <div class="tags"><slot name="price"></slot></div>
      <div class="session">Préouverture <span>ETH</span></div>
      <div class="tags volume"><slot name="volume"></slot></div>
    `;
  }

  connectedCallback() {
    this.draw();
    new ResizeObserver(() => this.draw()).observe(this);
  }

  draw() {
    const width = this.clientWidth;
    const height = this.clientHeight;
    const right = width - PLOT.axis;
    const sx = right / PLOT.width;
    const sy = height / PLOT.height;
    const X = x => x * sx;
    const Y = y => (y - PLOT.top) * sy;
    const stepX = step => Math.round(X(665.3 + step * 92 / 12));
    const points = list => list.split(' ').map(p => p.split(',')).map(([x, y]) => `${X(+x + .5)},${Y(+y)}`).join(' ');
    const rect = (x, y, w, h, fill) => `<rect x="${x}" y="${y}" width="${w}" height="${h}" fill="${fill}"/>`;
    const line = (x1, y1, x2, y2, stroke, extra = '') => `<line x1="${x1}" y1="${y1}" x2="${x2}" y2="${y2}" stroke="${stroke}" ${extra}/>`;
    const text = (x, y, value, fill = '#bbb', extra = '') => `<text x="${x}" y="${y}" fill="${fill}" ${extra}>${value}</text>`;
    const grey = '#6f7e79';
    const faint = '#151515';
    let out = `<defs>
      <linearGradient id="dark" x2="0" y2="1"><stop stop-color="#333"/><stop offset="1" stop-color="#0a0a0a"/></linearGradient>
      <linearGradient id="gold" x2="0" y2="1"><stop stop-color="#ffe62e"/><stop offset="1" stop-color="#f5bd10"/></linearGradient>
    </defs>`;

    // grid
    for (let k = 0; k <= 20; k++) {
      const x = X(21.5 + 92 * k);
      if (k !== 15) out += line(x, 0, x, Y(963), faint, 'stroke-dasharray="4 4"');
      out += line(x, Y(964), x, Y(968), grey);
    }
    [...LEVELS.map(l => l[1]), 835.5, 899.5].forEach(y => {
      out += line(0, Y(y), right, Y(y), faint, 'stroke-dasharray="4 4"');
      out += line(right, Y(y), right + 5, Y(y), grey);
    });
    out += line(X(1402), 0, X(1402), Y(963), '#626678', 'stroke-width="2" stroke-dasharray="6 6"');
    out += text(right - 11, Y(151), 'EHEALTH INC.', '#25272e', 'font-size="20" text-anchor="end"');

    // candles
    CANDLES.forEach(([step, up, high, top, bottom, low]) => {
      const x = stepX(step);
      const edge = up ? '#8cff8c' : '#ff9c9c';
      out += rect(x - 1, Y(high), 3, Y(low) - Y(high), edge);
      out += rect(x - 2, Y(top), 5, Y(bottom) - Y(top), edge);
      if (bottom - top > 3) out += rect(x - 1, Y(top) + 1, 3, Y(bottom) - Y(top) - 2, up ? '#50d250' : '#e06464');
    });
    out += `<polyline points="${points(INDICATOR)}" fill="none" stroke="#3f3"/>`;
    out += `<polyline points="${points(VWAP)}" fill="none" stroke="#ff0"/>`;

    // volume
    VOLUMES.forEach((v, n) => {
      const h = Math.abs(v) * sy;
      const x = stepX(n - 6) - 3;
      if (!v) return;
      out += rect(x, Y(963) - h, 6, h, v > 0 ? '#7dff5c' : '#ff7896');
      if (h > 2) out += rect(x + 1, Y(963) - h + 1, 4, h - 1, v > 0 ? '#3f0' : '#f36');
    });

    // frame and axes
    out += line(0, Y(771.5), width, Y(771.5), grey);
    out += line(0, Y(963.5), right, Y(963.5), grey);
    out += line(right + .5, 0, right + .5, Y(963), grey);
    out += line(width - .5, 0, width - .5, height, grey) + line(.5, 0, .5, height, grey);
    out += line(X(1401.5), Y(982), X(1401.5), height, grey);
    HOURS.forEach((hour, k) => { out += text(X(21.5 + 92 * k), Y(979), hour, '#bbb', 'text-anchor="middle"'); });
    out += text(X(701), Y(991), 'mer. 4 mai 2022', '#bbb', 'text-anchor="middle"');
    out += text(X(1633), Y(991), 'jeu. 5 mai 2022', '#bbb', 'text-anchor="middle"');
    LEVELS.forEach(([label, y]) => { out += text(right + 7, Y(y + 4), label, '#bbb', label === '10' ? 'font-weight="bold"' : ''); });
    out += text(right + 7, Y(839), '1 000k') + text(right + 7, Y(903), '500 000');
    out += text(3, Y(769), 'ProRealTime.com - Temps Réel - Heures étendues');

    // last values
    const flag = (y, w, h, fill, label, color, extra = '') =>
      `<rect x="${right + 5.5}" y="${Y(y) + .5}" width="${w}" height="${h}" fill="${fill}" stroke="${grey}"/>` +
      text(right + 5.5 + w / 2, Y(y) + h / 2 + 5, label, color, 'text-anchor="middle" ' + extra);
    out += line(right + 1, Y(370.5), right + 5, Y(370.5), '#ff0') + line(right + 1, Y(453.5), right + 5, Y(453.5), '#3f3');
    out += flag(360, 47, 20, 'url(#dark)', '10,311', '#ff0', 'font-size="14" font-weight="bold"');
    out += flag(402, 30, 16, 'url(#gold)', '10,06', '#222');
    out += flag(445, 36, 16, 'url(#dark)', '9,7967', '#3f3');
    out += flag(944, 17, 19, 'url(#dark)', '17', '#f36', 'font-size="13"');
    this.shadowRoot.querySelector('svg').innerHTML = out;
  }
}
customElements.define('prt-chart', PrtChart);

class PrtBottombar extends HTMLElement {
  constructor() {
    super();
    this.attachShadow({ mode: 'open' });
    this.shadowRoot.innerHTML = `
      <style>
        ${base}
        :host {
          display: flex; height: 26px; box-sizing: border-box;
          border: 1px solid #6f7e79; border-bottom-color: #4b5854;
          background: #999; color: #111;
        }
        button { flex: none; }
        .pencil { width: 30px; }
        .more { width: 16px; border: solid #6f7e79; border-width: 0 1px; color: #0c3232; }
        .white { gap: 4px; background: linear-gradient(#fff, #e4e4e4); }
        .ind { width: 86px; }
        .share { width: 21px; background: #2c93dc; }
        .ana { width: 75px; gap: 5px; }
        .tools, .zoom { display: flex; align-items: center; }
        .tools { padding: 0 1px; }
        .tools button { width: 25px; }
        .tools button:last-child { width: 16px; }
        .step { width: 16px; height: 16px; border: 1px solid #6f7e79; background: linear-gradient(#bbb, #999); }
        .scroll { flex: 1; display: flex; align-items: center; min-width: 0; }
        input {
          appearance: none; flex: 1; min-width: 0; height: 16px;
          border: solid #6f7e79; border-width: 1px 0; background: #999;
        }
        input::-webkit-slider-thumb {
          appearance: none; width: 218px; height: 14px;
          border: solid #6f7e79; border-width: 0 1px; background: linear-gradient(#bbb, #999);
        }
        .zoom { padding-left: 3px; }
        .zoom button { width: 26px; }
      </style>
      ${iconButton('pencil', 20, 'pencil')}
      ${iconButton('down', 8, 'more')}
      <button class="white ind">${icon('indicator', 20)}Indicateurs</button>
      ${iconButton('down', 8, 'more white')}
      ${iconButton('share', 16, 'share')}
      <button class="white ana">${icon('brackets', 18)}Analyser</button>
      <div class="tools">
        ${['chat', 'report', 'book', 'windows', 'candleTool'].map(tool => iconButton(tool, tool === 'report' ? 16 : 18)).join('')}
        ${iconButton('chevrons', 11)}
      </div>
      <div class="scroll">
        ${iconButton('left', 12, 'step')}
        <input type="range" min="0" max="1000" value="981" aria-label="Défilement">
        ${iconButton('right', 12, 'step')}
      </div>
      <div class="zoom">
        ${['calendar', 'undo', 'redo', 'zoomFit', 'zoomOut', 'zoomIn', 'dockDown'].map(tool => iconButton(tool, /do$/.test(tool) ? 16 : 19)).join('')}
      </div>
    `;
  }
}
customElements.define('prt-bottombar', PrtBottombar);

class ForumPage extends HTMLElement {
  constructor() {
    super();
    this.attachShadow({ mode: 'open' });
    this.shadowRoot.innerHTML = `
      <style>
        * { box-sizing: border-box; }
        :host { display: flex; flex-direction: column; height: 60px; font-family: "Open Sans", sans-serif; }
        .edge { flex: none; height: 8px; padding: 0 4px; background: #966800; }
        .edge div { height: 3px; background: linear-gradient(90deg, #222 16px, #14141c 16px 152px, #444 152px 206px, #14141c 206px); }
        .page { flex: 1; display: flex; min-height: 0; background: #fff; }
        .sheet { flex: 1; display: flex; justify-content: flex-end; margin: 0 61px 0 60px; padding-right: 37px; border: solid #ccd0d2; border-width: 0 1px; }
        .user { display: flex; flex-direction: column; align-items: center; width: 184px; }
        .avatar { flex: none; width: 70px; height: 5px; border-radius: 0 0 5px 5px; background: linear-gradient(90deg, #1478be 27px, #8ccbf8 27px 43px, #3f97d6 43px 62px, #1478be 62px); }
        .name { display: flex; flex: none; align-items: center; gap: 4px; height: 27px; }
        a { color: #1f5f82; font-size: 17px; font-weight: 300; line-height: 24px; text-decoration: none; }
        b { color: #2a850f; font-size: 16px; line-height: 22px; }
        .bar { display: flex; align-items: center; justify-content: center; width: 25px; padding-top: 26px; background: #f0f0f0; color: #505050; }
        .task { flex: none; height: 2px; background: linear-gradient(90deg, #1c1c1c 72px, #c0c0c0 72px 588px, #1c1c1c 588px); }
      </style>
      <div class="edge"><div></div></div>
      <div class="page">
        <div class="sheet">
          <div class="user">
            <div class="avatar"></div>
            <div class="name"><a href="#">Maximedemonts</a>${icon('france', 24)}${icon('badge', 24)}</div>
            <b>Online</b>
          </div>
        </div>
        <div class="bar">${icon('down', 12)}</div>
      </div>
      <div class="task"></div>
    `;
  }
}
customElements.define('forum-page', ForumPage);
</script>
</body>
</html>
